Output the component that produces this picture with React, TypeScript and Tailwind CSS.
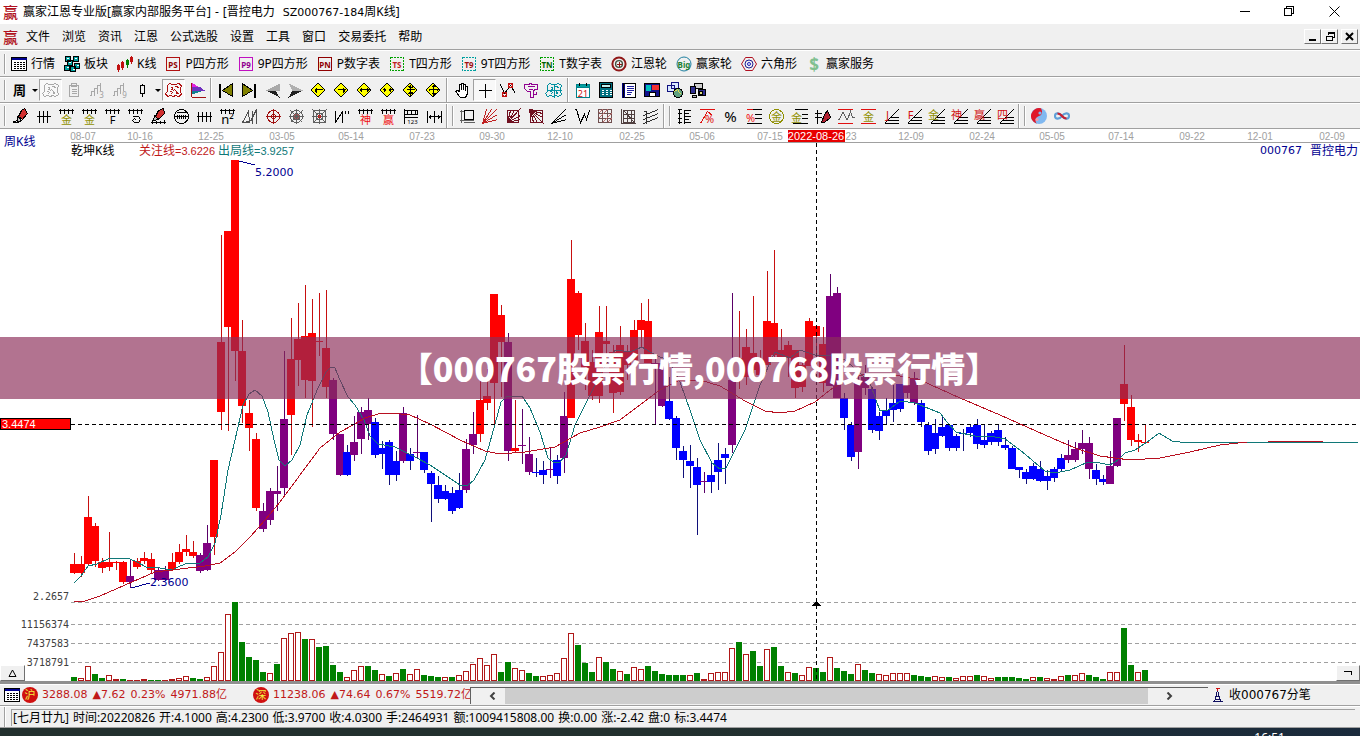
import { ReactNode, useState } from 'react';
import clsx from 'clsx';

type Candle = [number, number, number, number, 'r' | 'p' | 'b'];

// high, body top, body bottom, low, colour
const candles: Candle[] = [
  [553, 564, 573, 574, 'r'], [556, 564, 573, 577, 'r'], [496, 517, 564, 565, 'r'], [523, 526, 561, 567, 'r'],
  [558, 562, 568, 573, 'r'], [532, 562, 567, 571, 'r'], [561, 562, 563, 570, 'r'], [561, 562, 582, 584, 'r'],
  [559, 576, 582, 588, 'p'], [558, 561, 567, 569, 'r'], [552, 558, 561, 564, 'r'], [553, 559, 570, 573, 'r'],
  [568, 570, 580, 581, 'p'], [566, 570, 580, 581, 'p'], [553, 562, 570, 571, 'r'], [544, 552, 562, 564, 'r'],
  [535, 549, 552, 556, 'r'], [541, 552, 556, 558, 'r'], [553, 555, 571, 573, 'p'], [525, 543, 570, 571, 'p'],
  [460, 460, 537, 555, 'r'], [235, 342, 412, 430, 'r'], [231, 231, 327, 431, 'r'], [160, 160, 351, 381, 'r'],
  [320, 351, 406, 423, 'r'], [400, 413, 428, 451, 'r'], [433, 439, 508, 511, 'r'], [503, 511, 529, 532, 'p'],
  [488, 491, 520, 525, 'p'], [466, 491, 494, 511, 'p'], [351, 419, 488, 497, 'p'], [318, 359, 415, 455, 'r'],
  [303, 339, 360, 386, 'r'], [285, 336, 380, 398, 'r'], [299, 333, 381, 427, 'r'], [293, 341, 342, 356, 'r'],
  [290, 348, 387, 398, 'r'], [378, 380, 434, 440, 'p'], [434, 434, 475, 476, 'p'], [445, 452, 475, 476, 'b'],
  [416, 442, 455, 461, 'p'], [407, 412, 439, 454, 'p'], [398, 410, 424, 440, 'p'], [418, 422, 455, 458, 'b'],
  [441, 448, 454, 469, 'b'], [440, 442, 475, 485, 'b'], [451, 461, 475, 481, 'b'], [407, 413, 461, 463, 'p'],
  [448, 454, 461, 470, 'b'], [415, 452, 453, 458, 'p'], [452, 452, 470, 473, 'b'], [471, 473, 484, 522, 'b'],
  [476, 485, 499, 503, 'b'], [485, 491, 499, 500, 'b'], [487, 493, 511, 514, 'b'], [473, 490, 508, 509, 'b'],
  [439, 449, 490, 493, 'p'], [412, 434, 445, 454, 'p'], [380, 400, 434, 442, 'r'], [369, 396, 403, 410, 'r'],
  [294, 294, 383, 426, 'r'], [305, 315, 342, 397, 'r'], [333, 342, 451, 461, 'p'], [400, 448, 451, 452, 'r'],
  [409, 445, 446, 464, 'p'], [437, 454, 472, 475, 'p'], [458, 472, 473, 477, 'b'], [461, 470, 475, 484, 'b'],
  [448, 469, 470, 478, 'p'], [455, 460, 476, 484, 'b'], [392, 416, 458, 473, 'p'], [240, 279, 418, 418, 'r'],
  [291, 293, 335, 350, 'r'], [323, 341, 370, 390, 'r'], [350, 362, 396, 400, 'r'], [306, 332, 396, 403, 'r'],
  [306, 341, 344, 360, 'r'], [345, 352, 393, 413, 'r'], [326, 345, 392, 395, 'r'], [345, 351, 365, 380, 'r'],
  [320, 330, 360, 362, 'r'], [303, 320, 330, 347, 'r'], [299, 321, 363, 363, 'r'], [357, 363, 364, 424, 'p'],
  [360, 363, 406, 407, 'p'], [377, 401, 419, 420, 'b'], [416, 418, 448, 460, 'b'], [446, 451, 460, 478, 'b'],
  [445, 461, 466, 488, 'b'], [458, 467, 485, 535, 'b'], [472, 481, 482, 493, 'p'], [463, 475, 482, 493, 'b'],
  [443, 460, 472, 490, 'b'], [448, 454, 458, 484, 'b'], [293, 380, 445, 453, 'p'], [311, 358, 362, 389, 'r'],
  [329, 347, 377, 385, 'r'], [296, 353, 370, 373, 'r'], [350, 360, 375, 378, 'r'], [271, 321, 365, 365, 'r'],
  [250, 323, 355, 358, 'r'], [329, 350, 360, 362, 'r'], [341, 345, 358, 377, 'r'], [350, 350, 388, 398, 'r'],
  [360, 365, 387, 392, 'r'], [318, 321, 366, 366, 'r'], [326, 326, 336, 362, 'r'], [327, 344, 383, 392, 'r'],
  [274, 296, 386, 386, 'p'], [287, 293, 398, 398, 'p'], [393, 398, 418, 430, 'b'], [422, 425, 457, 461, 'b'],
  [372, 380, 452, 469, 'p'], [365, 377, 388, 395, 'p'], [387, 389, 430, 433, 'b'], [412, 416, 431, 440, 'b'],
  [398, 410, 416, 424, 'b'], [385, 403, 410, 422, 'b'], [384, 384, 409, 412, 'b'], [380, 385, 393, 398, 'p'],
  [372, 378, 403, 405, 'p'], [400, 403, 422, 427, 'b'], [422, 425, 451, 455, 'b'], [419, 433, 449, 454, 'b'],
  [416, 427, 436, 437, 'b'], [424, 425, 448, 451, 'b'], [434, 436, 448, 451, 'b'], [429, 433, 434, 451, 'b'],
  [425, 427, 433, 437, 'b'], [419, 425, 444, 449, 'b'], [424, 440, 445, 448, 'b'], [431, 433, 442, 445, 'b'],
  [425, 430, 442, 446, 'b'], [437, 445, 448, 450, 'b'], [446, 448, 469, 469, 'b'], [467, 467, 470, 478, 'b'],
  [469, 472, 479, 484, 'b'], [463, 466, 479, 480, 'b'], [461, 469, 481, 482, 'b'], [470, 476, 481, 490, 'b'],
  [467, 469, 478, 482, 'b'], [454, 458, 469, 472, 'b'], [440, 455, 460, 463, 'p'], [442, 449, 460, 462, 'p'],
  [430, 443, 449, 454, 'p'], [437, 443, 469, 479, 'p'], [464, 470, 479, 485, 'b'], [475, 479, 482, 485, 'b'],
  [451, 466, 484, 484, 'p'], [418, 418, 466, 467, 'p'], [345, 384, 404, 421, 'r'], [395, 407, 440, 446, 'r'],
  [434, 440, 442, 452, 'r'], [425, 442, 443, 443, 'r'],
];

// a leading "-" marks a falling week, the number is the bar height
const volumes = [
  '-4', '3', '15', '-7', '-3', '6', '2', '-2', '1', '1', '2', '-1', '-1', '1', '2', '3', '5', '-3', '-2', '4',
  '15', '29', '67', '-79', '-39', '-24', '-21', '-9', '8', '-17', '43', '48', '49', '-42', '42', '-34', '-35',
  '-16', '-9', '4', '11', '15', '-15', '-11', '7', '-5', '8', '-12', '7', '12', '-6', '-5', '-4', '4', '-4', '6',
  '10', '17', '23', '16', '27', '-9', '-19', '13', '11', '-8', '-5', '5', '6', '8', '23', '48', '-36', '-18',
  '-9', '24', '-19', '-12', '10', '-7', '14', '12', '-15', '-10', '-7', '-6', '-6', '-6', '6', '-8', '2', '8',
  '9', '9', '33', '-39', '27', '-30', '-15', '32', '-34', '-15', '9', '-8', '6', '14', '-13', '-9', '24', '-13',
  '-10', '-7', '17', '-11', '-8', '7', '6', '8', '8', '8', '-6', '-5', '-4', '5', '4', '-4', '3', '5', '5', '-6',
  '5', '3', '-4', '-4', '-4', '-3', '-2', '4', '-4', '3', '2', '5', '-6', '6', '8', '-6', '-4', '-2', '9', '9',
  '-53', '-16', '9', '-11',
];

const body = { r: '#ff0000', p: '#800080', b: '#0000ff' };
const wick = { r: '#c80f0f', p: '#5a0068', b: '#10107a' };

const dates: [number, string][] = [
  [83, '08-07'], [140, '10-16'], [211, '12-25'], [282, '03-05'], [351, '05-14'], [422, '07-23'], [492, '09-30'],
  [560, '12-10'], [632, '02-25'], [702, '05-06'], [770, '07-15'], [851, '23'], [911, '12-09'], [982, '02-24'],
  [1052, '05-05'], [1121, '07-14'], [1192, '09-22'], [1260, '12-01'], [1332, '02-09'],
];

const teal =
  '74,583 81,576 88,566 97,564 108,559 120,558 130,559 137,562 146,567 160,568 172,570 180,566 188,563 200,563 208,557 215,543 221,515 228,470 235,440 243,405 249,394 255,390 262,396 268,412 274,440 279,460 285,466 292,460 300,445 307,415 318,388 326,372 331,367 335,368 340,380 348,397 355,405 364,420 370,436 378,444 395,447 415,457 430,465 445,475 460,485 467,486 474,480 485,460 492,435 501,402 507,396 522,396 530,408 540,432 548,458 553,462 560,462 566,455 575,425 590,395 600,375 615,350 630,352 642,347 655,355 668,360 680,382 690,410 700,440 712,463 720,469 726,468 735,450 745,430 760,385 775,352 790,358 800,350 815,355 830,355 845,360 860,373 870,383 880,411 888,410 895,405 900,401 915,403 925,407 940,413 947,422 956,432 975,436 995,437 1005,439 1020,450 1045,471 1055,473 1070,470 1088,462 1100,463 1110,465 1118,460 1125,453 1135,450 1150,440 1159,433 1172,441 1180,442 1358,442';
const red =
  '74,602 85,601 100,596 125,585 155,572 180,569 205,566 220,563 235,552 250,537 265,520 280,502 300,475 320,448 340,432 355,424 365,418 378,414 392,413 410,415 430,424 460,440 485,451 500,454 525,452 555,447 580,433 600,427 620,420 640,405 660,390 680,380 700,380 720,386 745,401 765,411 780,413 795,411 815,402 830,390 850,378 870,373 890,374 920,380 960,398 1000,415 1045,435 1075,448 1100,456 1130,460 1160,458 1190,452 1220,445 1247,442';

function Ico({ children, sw = 1, c = '#000' }: { children: ReactNode; sw?: number; c?: string }) {
  return (
    <svg
      width="16"
      height="16"
      viewBox="-0.5 -0.5 16 16"
      fill="none"
      stroke={ c }
      strokeWidth={ sw }
      shapeRendering="crispEdges"
      className="overflow-visible"
    >
      { children }
    </svg>
  );
}

function Glyph({ x = 8, y = 15, s = 10, c = '#f01010', children }: { x?: number; y?: number; s?: number; c?: string; children: string }) {
  return (
    <text x={ x } y={ y } fontSize={ s } fill={ c } stroke="none" textAnchor="middle">
      { children }
    </text>
  );
}

function Square({ c, t, children }: { c: string; t: string; children: string }) {
  return (
    <Ico c={ c }>
      <rect x="1" y="1" width="13" height="13" strokeWidth="1" strokeDasharray={ children[0] === 'T' ? '2 1' : undefined } />
      <text x="7.5" y="11" fontSize="8" fontWeight="bold" fill={ t } stroke="none" textAnchor="middle">
        { children }
      </text>
    </Ico>
  );
}

function TableIcon() {
  return (
    <Ico>
      <rect x="0" y="1" width="15" height="13" fill="#fff" />
      <path d="M0 2h15M0 3h15" stroke="#000090" />
      <path d="M2 6h2m1 0h2m1 0h2m1 0h2M2 8h2m1 0h2m1 0h2m1 0h2M2 10h2m1 0h2m1 0h2m1 0h2M2 12h2m1 0h2m1 0h2m1 0h2" />
    </Ico>
  );
}

function Diamond({ d }: { d: string }) {
  return (
    <Ico>
      <path d="M7.5 0.5L14.5 7.500 7.500 14.500 0.500 7.500Z" fill="#ffff00" />
      <path d={ d } />
    </Ico>
  );
}

const comb = 'M0 2h15M2 0v5M6 0v5M10 0v5M14 0v5';

function Fan({ c, children }: { c: string; children: string }) {
  return (
    <Ico>
      <path d="M1 15L15 1M1 15h14M4 12h11M7 9h8" />
      <Glyph x={ 4 } y={ 10 } s={ 11 } c={ c }>{ children }</Glyph>
    </Ico>
  );
}

function Comb({ c, s = 11, children }: { c: string; s?: number; children: string }) {
  return (
    <Ico>
      <path d={ comb } />
      <Glyph c={ c } s={ s } y={ 15 }>{ children }</Glyph>
    </Ico>
  );
}

const pages: [string, ReactNode][] = [
  ['行情', <TableIcon />],
  ['板块', (
    <Ico>
      <path d="M1 0h5v5H1zM9 0h5v5H9zM3 4h5v5H3zM0 9h5v5H0zM10 7h5v5h-5zM6 10h5v5H6z" fill="#00a0a0" />
      <path d="M2 2h2M10 2h2M4 6h2M2 11h2M12 9h2M8 13h2" stroke="#fff" />
    </Ico>
  )],
  ['K线', (
    <Ico c="#c01010">
      <path d="M0 9h2v4H0zM1 7v8M4 6h2v5H4zM5 4v9M13 1h2v4h-2zM14 -1v8" fill="#f0f0f0" />
      <path d="M9 4h2v4H9zM10 2v9" stroke="#008000" fill="#008000" />
    </Ico>
  )],
  ['P四方形', <Square c="#b01010" t="#900000">PS</Square>],
  ['9P四方形', <Square c="#c010c0" t="#900090">P9</Square>],
  ['P数字表', <Square c="#900000" t="#900000">PN</Square>],
  ['T四方形', <Square c="#00a000" t="#c02020">TS</Square>],
  ['9T四方形', <Square c="#00a0a0" t="#a01010">T9</Square>],
  ['T数字表', <Square c="#00a000" t="#006000">TN</Square>],
  ['江恩轮', (
    <Ico c="#901818" sw={ 2 }>
      <circle cx="7.5" cy="7.5" r="6.6" shapeRendering="auto" />
      <circle cx="7.5" cy="7.5" r="3.4" strokeWidth="1.4" stroke="#405040" shapeRendering="auto" />
      <path d="M7.5 5v5M5 7.5h5" strokeWidth="1" />
    </Ico>
  )],
  ['赢家轮', (
    <Ico c="#2080a0">
      <circle cx="7.5" cy="7.5" r="7" shapeRendering="auto" />
      <text x="7.5" y="11" fontSize="8" fontWeight="bold" fill="#208030" stroke="none" textAnchor="middle">Big</text>
    </Ico>
  )],
  ['六角形', (
    <Ico c="#b01020">
      <path d="M4 1h7l4 6.5-4 6.5H4L0 7.5Z" shapeRendering="auto" />
      <circle cx="7.5" cy="7.5" r="4" stroke="#202090" shapeRendering="auto" />
      <circle cx="7.5" cy="7.5" r="1.5" stroke="#2020c0" shapeRendering="auto" />
    </Ico>
  )],
  ['赢家服务', (
    <Ico>
      <text x="7.5" y="14" fontSize="17" fontWeight="bold" fill="#80c090" stroke="none" textAnchor="middle">$</text>
    </Ico>
  )],
];

const cloud = 'M1 3l2-2 3 1h3l3-1 3 2-1 3v3l1 3-3 2-3-1-2 1-3-1-3 1-2-3 2-2V6zM4 5h2v2H4M8 4h3l1 2M6 9l2-2 2 2v2M4 12l2-2M12 12l-2-3M3 9h2';
const waves = 'M0 13h2V9h3v4M5 11V6h3v5M8 9V3h3v5M11 6V0';

const nav: [string, ReactNode][] = [
  ['筹码', <Ico c="#a8a8a8"><path d={ cloud } /></Ico>],
  ['资料', <Ico c="#a8a8a8"><path d="M3 3h9v11H3zM5 1h5v3H5zM5 7h5M5 9h5M5 11h5" /></Ico>],
  ['三浪', <Ico c="#a8a8a8"><path d={ waves } /><Glyph x={ 12 } y={ 15 } s={ 8 } c="#a0a0a0">3</Glyph></Ico>],
  ['九浪', <Ico c="#a8a8a8"><path d={ waves } /><Glyph x={ 12 } y={ 15 } s={ 8 } c="#a0a0a0">9</Glyph></Ico>],
  ['K线样式', <Ico><path d="M5 3h4v8H5zM7 1v2M7 11v3" /></Ico>],
];

const moves: [string, ReactNode][] = [
  ['最前', <Ico><path d="M1 1v14M14 1v13L4 8z" fill="#808000" /><path d="M2 1v14" /></Ico>],
  ['最后', <Ico><path d="M14 1v14M1 1v13L11 8z" fill="#808000" /><path d="M13 1v14" /></Ico>],
  ['后退', <Ico c="none"><path d="M15 1v7H1z" fill="#a8a8a8" /><path d="M15 15L11 8H1z" fill="#202020" /></Ico>],
  ['前进', <Ico c="none"><path d="M1 1l4 7h10z" fill="#b0b0b0" /><path d="M1 15L5 8h10z" fill="#202020" /></Ico>],
  ['左移', <Diamond d="M4 7h8M5 6v3M6 5v5" />],
  ['右移', <Diamond d="M4 7h8M11 6v3M10 5v5" />],
  ['横向放大', <Diamond d="M3 7h10M4 6v2M5 5v4M12 6v2M11 5v4" />],
  ['横向缩小', <Diamond d="M3 7h3M9 7h4M6 6v2M5 5v4M10 6v2M11 5v4" />],
  ['纵向缩小', <Diamond d="M4 7h8M7.500 2v11M6 5h4M5 4h2M9 4h2M6 10h4M5 11h6" />],
  ['纵向放大', <Diamond d="M3 7h10M7.500 2v11M7 3h2M6 4h4M7 12h2M6 11h4M4 6v2M12 6v2" />],
];

const marks: [string, ReactNode][] = [
  ['手形', <Ico><path d="M5 9V2h2v5V1h2v6V2h2v6V4h2v7l-2 4H6L1 9l2-1z" fill="#fff" /></Ico>],
  ['十字光标', <Ico><path d="M1 8h13M7.5 1v14" /></Ico>],
  ['折线', (
    <Ico>
      <path d="M0 2l4 9 6-8 5 8" />
      <circle cx="4" cy="12" r="2" stroke="#c01010" strokeWidth="1.5" />
      <circle cx="10" cy="3" r="2" stroke="#c01010" strokeWidth="1.5" />
    </Ico>
  )],
  ['神奇', <Ico c="#900090" sw={ 1.2 }><path d="M1 2h4l2-1 2 1h5v5h-3l-1 2v6H7V9H4L1 6zM4 4h7M5 7h4M10 12h3V9" /></Ico>],
  ['大脑', <Ico c="#0090a0"><path d={ cloud } /><path d="M8 1v14M1 8h14" /></Ico>],
];

const utils: [string, ReactNode][] = [
  ['日历', (
    <Ico>
      <path d="M1 2h13v13H1z" fill="#fff" stroke="#00808a" />
      <path d="M1 2h13v3H1z" fill="#00a0a0" stroke="#00808a" />
      <path d="M4 0v3M11 0v3" />
      <Glyph x={ 7.5 } y={ 14 } s={ 9 } c="#d01010">21</Glyph>
    </Ico>
  )],
  ['计算器', (
    <Ico>
      <path d="M1 0h13v15H1z" fill="#007080" />
      <path d="M3 2h9v3H3z" fill="#c0f0f0" />
      <path d="M3 8h2m2 0h2m2 0h2M3 10h2m2 0h2m2 0h2M3 12h2m2 0h2m2 0h2" stroke="#fff" />
    </Ico>
  )],
  ['笔记', (
    <Ico>
      <path d="M2 1h12v14H2z" fill="#fff" />
      <path d="M1 0v15M3 1v14" stroke="#000080" />
      <path d="M5 4h7M5 6h7M5 8h7M5 10h5M5 12h4" stroke="#2020a0" />
    </Ico>
  )],
  ['保存', (
    <Ico>
      <path d="M0 1h15v13H0z" fill="#10108a" />
      <path d="M1 2h5v6H1z" fill="#00c0c0" stroke="none" />
      <path d="M7 2h7v5H7z" fill="#f03030" stroke="none" />
      <path d="M5 10h6v4H5z" fill="#fff" />
    </Ico>
  )],
  ['网络', (
    <Ico>
      <path d="M4 0h7v6H4zM0 3h7v6H0z" fill="#d8e8ff" stroke="#101080" />
      <circle cx="10.5" cy="10.5" r="4.5" fill="#60a080" />
      <path d="M7 9l3-2 2 3 2 2" stroke="#e0e050" />
    </Ico>
  )],
  ['传输', (
    <Ico>
      <path d="M4 1h8v5H4z" fill="#d0d0d0" />
      <path d="M0 4h5v7H0zM8 7h7v6H8z" fill="#303090" />
      <path d="M2 13h4v2H2z" fill="#c0c0c0" />
      <path d="M9 9h3v3H9z" fill="#e0e080" />
    </Ico>
  )],
];

const gold = '#909000';

const draw1: [string, ReactNode][] = [
  ['画笔', (
    <Ico>
      <path d="M1 14l3-1 4-4" strokeWidth="2" />
      <path d="M6 8l3-6 3-2 3 5-5 6z" fill="#d03030" />
      <path d="M5 8l4 4-4 2z" fill="#c0c0c0" />
    </Ico>
  )],
  ['周期线', <Ico><path d="M1 8h14M4 2v12M8 2v12M12 2v12" /></Ico>],
  ['黄金周期', <Comb c={ gold }>金</Comb>],
  ['黄金分割', <Comb c={ gold }>金</Comb>],
  ['斐波那契', <Comb c="#000">F</Comb>],
  ['螺旋', <Ico><path d={ comb } /><path d="M5 8h6l2 3-2 3H7l-2-2 2-2 2 2" /></Ico>],
  ['刻度笔', (
    <Ico>
      <path d="M0 14h15M2 11v4M6 12v3M10 12v3M14 11v4" />
      <path d="M4 10l4-8 5-2 1 5-5 5z" fill="#d03030" />
      <path d="M4 7l4 4-5 1z" fill="#c0c0c0" />
    </Ico>
  )],
  ['圆周', <Ico><circle cx="8" cy="8" r="7" /><path d="M1 8h14M4 6v4M6 6v4M8 6v4M10 6v4M12 6v4M3 4h10" /></Ico>],
  ['等距', <Ico><path d="M0 8h15M2 3v10M6 3v10M10 3v10M14 3v10" /></Ico>],
  ['平方', <Comb c="#000" s={ 13 }>n²</Comb>],
  ['角度', <Ico c="#505050"><path d="M0 14L6 3l1 10zM8 13L14 1M10 2v13M14 2v13M1 14h6" /></Ico>],
  ['轮心', <Ico c="#a01010"><circle cx="8" cy="8" r="6" /><path d="M0 8h15M8 0v15" /><circle cx="8" cy="8" r="2" /></Ico>],
  ['蛛网', (
    <Ico c="#606060">
      <circle cx="8" cy="8" r="6" />
      <circle cx="8" cy="8" r="3" fill="#c05050" />
      <path d="M8 0v15M0 8h15M2 2l12 12M14 2L2 14" />
    </Ico>
  )],
  ['方网', <Ico c="#606060"><path d="M2 2h12v12H2zM5 5h6v6H5zM8 0v15M0 8h15M1 1l14 14M15 1L1 15" /><path d="M7 7h2v2H7z" stroke="#c02020" /></Ico>],
  ['波段', <Ico><path d="M1 2v12M1 14L8 3v11M11 2v3M14 2v3" /></Ico>],
  ['神数', <Comb c="#f01010">神</Comb>],
  ['赢数', <Comb c="#f01010">赢</Comb>],
  ['数列', <Ico><path d="M1 0v15M1 2h13v4H1M4 2v4M8 2v4M12 2v4M1 9h13" /><Glyph x={ 9 } y={ 15 } s={ 6 } c="#000">123</Glyph></Ico>],
  ['区间', <Ico><path d="M1 2v12M15 2v12M8 2v12M2 8h12M4 6v4M3 7v2M12 6v4M13 7v2" /></Ico>],
];

const draw2: [string, ReactNode][] = [
  ['矩形', <Ico c="#606060"><path d="M0 3h4M0 12h14M2 1v13M4 14h11" /><path d="M5 2h9v9H5z" stroke="#000" /></Ico>],
  ['扇形', <Ico c="#c02020"><path d="M0 15L4 1M0 15L9 1M0 15L14 1M0 15l15-9M0 15l15-4" /></Ico>],
  ['方扇', <Ico c="#701020"><path d="M2 2h11v12H2zM2 14L5 2M2 14L9 2M2 14L15 0M2 14l13-7M2 14l13-3" /></Ico>],
  ['反扇', <Ico c="#701020"><path d="M2 2h12v12H2zM2 2l12 3M2 2l12 7M2 2l14 14M2 2l7 12M2 2l3 12" /><path d="M1 1h3v3H1z" fill="#701020" /></Ico>],
  ['角度线', <Ico><path d="M0 15L14 1M0 15l15-9M0 15l15-4" /></Ico>],
  ['浪形', <Ico><path d="M0 1h2l4 13 4-8 2 5 3-9" /></Ico>],
  ['网格', <Ico c="#705050"><path d="M1 1h13v13H1zM1 5h13M1 10h13M5 1v13M10 1v13" /><path d="M1 5l4-4M1 10l9-9M5 14l9-9M10 14l4-4" stroke="#c07070" /></Ico>],
  ['坐标格', <Ico c="#504040"><path d="M3 2h11v12H3zM3 6h11M3 10h11M7 2v12M11 2v12" /><path d="M1 0v15h14M3 2l11 12" /></Ico>],
  ['平行线', <Ico c="#303030"><path d="M0 7l15-6M0 11l15-6M0 15l15-6M3 3v12M0 3l3 0" /></Ico>],
];

const draw3: [string, ReactNode][] = [
  ['标尺', <Ico><path d="M3 1v14M8 1v14M1 1h4M1 5h4M1 10h4M1 14h4M8 2h6M8 5h4M8 8h6M8 11h4M8 14h6" /></Ico>],
  ['百分比线', <Ico c="#e01010"><path d="M0 1h15M1 15l7-12 5 4" /><Glyph x={ 10 } y={ 14 } s={ 11 } c="#e01010">%</Glyph></Ico>],
  ['百分比', <Ico><Glyph x={ 8 } y={ 13 } s={ 15 } c="#000">%</Glyph></Ico>],
  ['百分比分割', <Ico><path d="M5 1h11M9 6h7M9 10h7M1 15h15" /><path d="M1 1h6" stroke="#e01010" /><Glyph x={ 5 } y={ 13 } s={ 11 }>%</Glyph></Ico>],
  ['金圆', <Ico c={ gold }><circle cx="8" cy="8" r="7" /><Glyph x={ 8 } y={ 12 } s={ 11 } c={ gold }>金</Glyph></Ico>],
  ['金线', <Ico><path d="M3 1h13M10 6h6M10 10h6M1 15h15" /><Glyph x={ 5 } y={ 13 } s={ 11 } c={ gold }>金</Glyph></Ico>],
  ['价位笔', <Ico><path d="M3 1v14M0 5h7M0 9h7" /><path d="M7 14l3-8 3-4 3 7-6 5z" fill="#b02030" /></Ico>],
  ['波动', <Ico c="#606060"><path d="M0 1h15M0 15h15" stroke="#e01010" /><path d="M0 11h2l3-7h1l3 7h1l3-8 2 6h2" /></Ico>],
  ['金价', <Ico c="#e01010"><path d="M0 1h15M0 15h15" /><Glyph x={ 8 } y={ 12 } s={ 11 } c={ gold }>金</Glyph></Ico>],
  ['J角', <Fan c="#d01010">J</Fan>],
  ['F角', <Fan c="#d01010">F</Fan>],
  ['金角', <Fan c={ gold }>金</Fan>],
  ['神角', <Fan c="#d01010">神</Fan>],
  ['赢角', <Fan c="#d01010">赢</Fan>],
  ['四角', <Fan c="#d01010">四</Fan>],
];

const extra: [string, ReactNode][] = [
  ['太极', (
    <svg width="16" height="16" viewBox="0 0 16 16">
      <circle cx="8" cy="8" r="8" fill="#80b8f0" />
      <path d="M10 0.3A8 8 0 1 0 6 15.8C3 12 5 9 8 8S12 4 10 0.3Z" fill="#e01828" />
      <circle cx="9" cy="5" r="1.6" fill="#80b8f0" />
      <circle cx="6" cy="11.5" r="1.6" fill="#e8a0b0" />
    </svg>
  )],
  ['无限', (
    <svg width="16" height="16" viewBox="0 0 16 16" fill="none" strokeWidth="2.2">
      <path d="M8 8C6 5 1 4 1 8s5 3 7 0 7-4 7 0-5 3-7 0" stroke="#60a0d8" />
      <path d="M3.5 5.5C6 5.5 7 7 8 8s2 2.500 4.500 2.500" stroke="#c82030" />
    </svg>
  )],
];

function Tools({ items, active }: { items: [string, ReactNode][]; active?: string }) {
  return (
    <>
      { items.map(([name, icon]) => (
        <button
          key={ name }
          type="button"
          aria-label={ name }
          title={ name }
          className={ clsx(
            'flex h-[22px] w-[23px] shrink-0 items-center justify-center',
            name === active && 'border border-t-[#a0a0a0] border-r-white border-b-white border-l-[#a0a0a0] bg-[#f8f8f8]',
          ) }
        >
          { icon }
        </button>
      )) }
    </>
  );
}

function Grip() {
  return <span className="ml-1 mr-[2px] h-5 w-[2px] shrink-0 border-l border-[#a0a0a0] bg-white" />;
}

function Sep({ grip }: { grip?: boolean }) {
  return (
    <span className={ clsx('flex h-6 shrink-0 items-center', grip ? 'w-[10px] gap-1 pl-[1px]' : 'w-[6px] justify-center') }>
      <span className="h-full w-[2px] border-r border-white bg-[#a0a0a0]" />
      { grip && <span className="h-5 w-[2px] border-r border-white bg-[#a0a0a0]" /> }
    </span>
  );
}

function Drop({ name }: { name: string }) {
  return (
    <button type="button" aria-label={ name } className="flex h-[22px] w-2 shrink-0 items-center justify-center">
      <svg width="6" height="3" viewBox="0 0 6 3"><path d="M0 0h6L3 3z" /></svg>
    </button>
  );
}

function Chart() {
  return (
    <svg viewBox="0 129 1360 552" className="block h-auto w-full" shapeRendering="crispEdges">
      <path d="M71 142.500H1360" stroke="#a0a0a0" />
      <g fontSize="10" fill="#a0a0a0" textAnchor="middle" className="font-['Liberation_Sans',sans-serif]">
        { dates.map(([x, d], i) => (
          <text key={ i } x={ x } y="140">{ d }</text>
        )) }
      </g>

      <path d="M71 602.500H1358M71 624.500H1358M71 643.500H1358M71 662.500H1358" stroke="#a0a0a0" strokeDasharray="4 3" />
      <g fontSize="10" fill="#404040" textAnchor="end" className="font-['DejaVu_Sans_Mono',monospace]">
        <text x="69" y="600">2.2657</text>
        <text x="69" y="628">11156374</text>
        <text x="69" y="647">7437583</text>
        <text x="69" y="666">3718791</text>
      </g>

      { volumes.map((v, i) => {
        const h = Math.abs(Number(v));
        const x = 71 + i * 7;
        return v[0] === '-' ? (
          <rect key={ i } x={ x } y={ 681 - h } width="6" height={ h } fill="#008000" />
        ) : (
          <rect key={ i } x={ x + 0.5 } y={ 681.5 - h } width="5" height={ Math.max(h - 1, 0.5) } fill="#fff" stroke="#b01818" />
        );
      }) }

      { candles.map(([high, top, bottom, low, k], i) => (
        <g key={ i }>
          <rect x={ 74 + i * 7 } y={ high } width="1" height={ low - high } fill={ wick[k] } />
          <rect x={ 70 + i * 7 } y={ top } width="8" height={ bottom - top } fill={ body[k] } />
        </g>
      )) }

      <polyline points={ teal } fill="none" stroke="#107878" />
      <polyline points={ red } fill="none" stroke="#b81020" />
      <path d="M1268 441.500H1323" stroke="#b81020" />

      <path d="M239 161L255 165M131 588L150 583" stroke="#000090" />
      <g fontSize="11" fill="#000090" className="font-['DejaVu_Sans',sans-serif]">
        <text x="255" y="176">5.2000</text>
        <text x="150" y="586">2.3600</text>
      </g>

      <path d="M71 424.500H1358" stroke="#000" strokeDasharray="4 3" />
      <path d="M816.500 143V681" stroke="#000" strokeDasharray="4 3" />
      <path d="M812 606h9l-4.500-5z" />
      <rect x="0.500" y="418.500" width="70" height="11" fill="#ff0000" stroke="#000" />
      <rect x="788" y="130" width="57" height="12" fill="#e80000" />
      <g fontSize="11" fill="#fff" className="font-['Liberation_Sans',sans-serif]">
        <text x="2" y="428">3.4474</text>
        <text x="816" y="140" textAnchor="middle">2022-08-26</text>
      </g>
    </svg>
  );
}

const menus = ['文件', '浏览', '资讯', '江恩', '公式选股', '设置', '工具', '窗口', '交易委托', '帮助'];

const fields = [
  '[七月廿九]', '时间:20220826', '开:4.1000', '高:4.2300', '低:3.9700', '收:4.0300', '手:2464931',
  '额:1009415808.00', '换:0.00', '涨:-2.42', '盘:0', '标:3.4474',
];

const bevel = 'border border-t-white border-r-[#707070] border-b-[#707070] border-l-white bg-[#f0f0f0]';

function Index({ mark, values }: { mark: string; values: string[] }) {
  return (
    <>
      <span className="flex size-4 shrink-0 items-center justify-center rounded-full bg-[#d01010] text-[11px] text-[#f0f040]">
        { mark }
      </span>
      <span className="flex gap-[5px] pl-1 font-['DejaVu_Sans','Noto_Sans_CJK_SC',sans-serif] text-[11px] whitespace-nowrap text-[#c01818]">
        { values.map((v) => (
          <span key={ v }>{ v }</span>
        )) }
      </span>
    </>
  );
}

export default function App() {
  const [cursor] = useState('十字光标');

  return (
    <div className="overflow-hidden bg-[#f0f0f0] font-['Noto_Sans','Noto_Sans_CJK_SC',sans-serif] text-xs leading-4 text-black">
      <header className="flex h-6 items-center bg-white pl-[3px] pr-[3px]">
        <span className="w-5 text-[15px] font-medium text-[#b01020]">赢</span>
        <h1 className="flex grow gap-1">
          <span>赢家江恩专业版[赢家内部服务平台]</span>
          <span>-</span>
          <span className="pr-1">[晋控电力</span>
          <span><span className="font-['DejaVu_Sans',sans-serif] text-[11px]">SZ000767-184</span>周K线]</span>
        </h1>
        <button type="button" aria-label="最小化" className="flex h-6 w-[45px] items-center justify-center">
          <Ico><path d="M2 7h10" /></Ico>
        </button>
        <button type="button" aria-label="还原" className="flex h-6 w-[45px] items-center justify-center">
          <Ico><path d="M2 4h7v7H2zM4 4V2h7v7h-2" /></Ico>
        </button>
        <button type="button" aria-label="关闭" className="flex h-6 w-[45px] items-center justify-center">
          <Ico><path d="M2 2l10 10M12 2L2 12" shapeRendering="auto" /></Ico>
        </button>
      </header>

      <nav className="flex h-[26px] items-center border-b border-[#a0a0a0] pl-[3px] pr-[2px]">
        <span className="w-[23px] text-[15px] font-medium text-[#b01020]">赢</span>
        <div className="flex grow gap-3">
          { menus.map((m) => (
            <button key={ m } type="button">{ m }</button>
          )) }
        </div>
        <button type="button" aria-label="最小化窗口" className={ clsx(bevel, 'flex h-[15px] w-[17px] items-center justify-center') }>
          <svg width="10" height="9" viewBox="0 0 10 9"><path d="M1 7h7v2H1z" /></svg>
        </button>
        <button type="button" aria-label="还原窗口" className={ clsx(bevel, 'mr-[3px] flex h-[15px] w-[17px] items-center justify-center') }>
          <svg width="10" height="9" viewBox="0 0 10 9" fill="none" stroke="#000" shapeRendering="crispEdges">
            <path d="M3.500 2.500v-2h6v5h-2M1.500 4.500h6v4h-6zM3 1h7M1 4h7" />
          </svg>
        </button>
        <button type="button" aria-label="关闭窗口" className={ clsx(bevel, 'flex h-[15px] w-[17px] items-center justify-center') }>
          <svg width="9" height="9" viewBox="0 0 9 9"><path d="M1 1l7 7M8 1L1 8" stroke="#000" strokeWidth="2" /></svg>
        </button>
      </nav>

      <div className="flex h-[27px] items-center border-t border-b border-t-white border-b-[#a0a0a0]">
        <Grip />
        <div className="flex gap-[9px] pl-[3px]">
          { pages.map(([name, icon]) => (
            <button key={ name } type="button" className="flex items-center gap-1 whitespace-nowrap">
              { icon }
              { name }
            </button>
          )) }
        </div>
      </div>

      <div className="flex h-[26px] items-center border-t border-b border-t-white border-b-[#a0a0a0]">
        <Grip />
        <button type="button" className="h-[22px] w-[23px] shrink-0 text-[13px] font-bold">周</button>
        <Drop name="选择周期" />
        <Tools items={ nav } active="筹码" />
        <Drop name="选择样式" />
        <Tools
          active="江恩图"
          items={ [
            ['江恩图', <Ico c="#b01010" sw={ 1.2 }><path d={ cloud } /></Ico>],
            ['分布', (
              <Ico c="none">
                <path d="M2 0v14" stroke="#a01010" />
                <path d="M2 15h14" stroke="#a01010" />
                <path d="M2 0l8 5H2z" fill="#e020e0" />
                <path d="M2 4h8l5 4H2z" fill="#7030c0" />
                <path d="M2 8h12L2 12z" fill="#108090" />
              </Ico>
            )],
          ] }
        />
        <Sep />
        <Tools items={ moves } />
        <Sep />
        <Tools items={ marks } active={ cursor } />
        <Sep />
        <Tools items={ utils } />
      </div>

      <div className="flex h-[26px] items-center border-t border-b border-t-white border-b-[#a0a0a0]">
        <Grip />
        <Tools items={ draw1 } />
        <Sep grip />
        <Tools items={ draw2 } />
        <Sep grip />
        <Tools items={ draw3 } />
        <Sep grip />
        <Tools items={ extra } />
      </div>

      <main className="relative border-b-[3px] border-[#909090] bg-white">
        <Chart />
        <div className="absolute inset-x-0 top-[5px] flex items-start">
          <span className="w-[66px] pl-1 text-[#000090]">周K线</span>
          <div className="flex grow pt-[9px] pl-[5px]">
            <span className="w-[68px]">乾坤K线</span>
            <span className="w-[79px] text-[#c01818]">
              关注线<span className="font-['Liberation_Sans',sans-serif] text-[11px]">=3.6226</span>
            </span>
            <span className="grow text-[#107878]">
              出局线<span className="font-['Liberation_Sans',sans-serif] text-[11px]">=3.9257</span>
            </span>
            <span className="flex gap-2 pr-[2px] text-[#000090]">
              <span className="font-['DejaVu_Sans',sans-serif] text-[11px]">000767</span>
              晋控电力
            </span>
          </div>
        </div>
        <div className="absolute inset-x-0 top-[208px] flex h-[62px] items-center justify-center bg-[rgba(140,46,90,0.67)] pl-[38px]">
          <p className="font-['Noto_Sans_CJK_SC',sans-serif] text-[34px] leading-[48px] font-black whitespace-nowrap text-white">
            【000767股票行情,000768股票行情】
          </p>
        </div>
        <button type="button" aria-label="展开" className={ clsx(bevel, 'absolute bottom-0 left-0 flex h-4 w-[25px] items-center justify-center') }>
          <svg width="9" height="8" viewBox="0 0 9 8" fill="none" stroke="#000"><path d="M1 7.500h7L4.500 1z" /></svg>
        </button>
        <button type="button" aria-label="收起" className={ clsx(bevel, 'absolute right-0 bottom-0 flex h-4 w-6 items-center justify-center') }>
          <svg width="8" height="4" viewBox="0 0 8 4" fill="none" stroke="#000" shapeRendering="crispEdges"><path d="M0 .5h7.500v3" /></svg>
        </button>
      </main>

      <div className="flex h-[22px] items-center border-t border-b border-t-white border-b-[#a0a0a0]">
        <div className="flex w-[470px] shrink-0 items-center overflow-hidden pl-1">
          <TableIcon />
          <div className="ml-[2px] flex w-[231px] shrink-0 items-center">
            <Index mark="沪" values={ ['3288.08', '▲7.62', '0.23%', '4971.88亿'] } />
          </div>
          <div className="flex shrink-0 items-center">
            <Index mark="深" values={ ['11238.06', '▲74.64', '0.67%', '5519.72亿'] } />
          </div>
        </div>
        <div className="flex h-[17px] grow items-stretch border-t border-l border-[#606060]">
          <button type="button" aria-label="向左" className="flex w-[34px] items-center justify-center pl-2">
            <svg width="7" height="8" viewBox="0 0 7 8" fill="none" stroke="#404040" strokeWidth="2"><path d="M5.500 0.500L2 4l3.500 3.500" /></svg>
          </button>
          <span className="grow bg-[#cdcdcd]" />
          <button type="button" aria-label="向右" className="flex w-[60px] items-center pl-[18px]">
            <svg width="7" height="8" viewBox="0 0 7 8" fill="none" stroke="#404040" strokeWidth="2"><path d="M1.500 0.500L5 4 1.500 7.500" /></svg>
          </button>
        </div>
        <div className="flex w-[152px] shrink-0 items-center gap-1 pl-[1px]">
          <Ico c="#101060">
            <path d="M8 3L5 14M8 3l3 11M3 14h10M6 9h4M5 12h6" />
            <path d="M8 0v3M6 1h4" stroke="#d01010" />
          </Ico>
          <span>收<span className="font-['DejaVu_Sans',sans-serif]">000767</span>分笔</span>
        </div>
      </div>

      <footer className="flex h-[22px] items-center border-t border-b border-t-white border-b-[#a0a0a0]">
        <Grip />
        <p className="mr-[5px] ml-[3px] flex h-[17px] grow gap-1 border-t border-l border-[#a0a0a0] pl-[1px] whitespace-nowrap">
          { fields.map((f) => (
            <span key={ f }>{ f }</span>
          )) }
        </p>
      </footer>

      <div className="flex h-2 justify-end overflow-hidden bg-linear-to-r from-[#22302e] via-[#22302e] to-[#1a2a3c] pr-[75px] text-white">
        <span className="pt-1 leading-3">16:51</span>
      </div>
    </div>
  );
}
